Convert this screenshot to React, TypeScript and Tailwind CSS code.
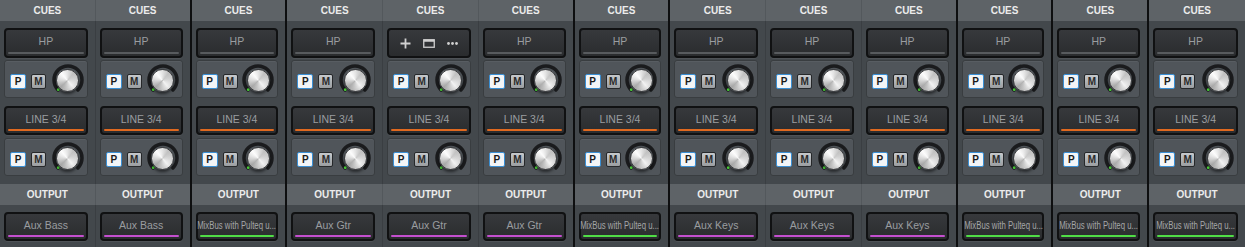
import React from "react";

type Sep = "light" | "black" | "none";

type Strip = {
  output: string;
  bus: "aux" | "mix";
  sep: Sep;
  icons?: boolean;
};

const strips: Strip[] = [
  { output: "Aux Bass", bus: "aux", sep: "light" },
  { output: "Aux Bass", bus: "aux", sep: "black" },
  { output: "MixBus with Pulteq u...", bus: "mix", sep: "black" },
  { output: "Aux Gtr", bus: "aux", sep: "light" },
  { output: "Aux Gtr", bus: "aux", sep: "light", icons: true },
  { output: "Aux Gtr", bus: "aux", sep: "black" },
  { output: "MixBus with Pulteq u...", bus: "mix", sep: "black" },
  { output: "Aux Keys", bus: "aux", sep: "light" },
  { output: "Aux Keys", bus: "aux", sep: "light" },
  { output: "Aux Keys", bus: "aux", sep: "black" },
  { output: "MixBus with Pulteq u...", bus: "mix", sep: "black" },
  { output: "MixBus with Pulteq u...", bus: "mix", sep: "black" },
  { output: "MixBus with Pulteq u...", bus: "mix", sep: "none" },
];

function Knob() {
  return (
    <div className="relative flex h-[32px] w-[32px] items-center justify-center">
      <svg className="absolute inset-0" width="32" height="32" viewBox="0 0 32 32">
        <path
          d="M6.1 25.9 A14 14 0 1 1 25.9 25.9"
          fill="none"
          stroke="#1a1b1d"
          strokeWidth="3.5"
          strokeLinecap="round"
        />
        <circle cx="6.3" cy="25.7" r="1.4" fill="#52e03f" />
      </svg>
      {/* metal cap */}
      <div className="relative h-[23px] w-[23px] rounded-full border border-[#3a3b3d] bg-[conic-gradient(from_-40deg,#fbfbfb,#b9b9b9_22%,#f2f2f2_50%,#a2a2a2_74%,#fbfbfb)] shadow-[0_2px_3px_rgba(0,0,0,0.5)]">
        <div className="absolute inset-0 rounded-full bg-[radial-gradient(circle_at_35%_30%,rgba(255,255,255,0.4),rgba(255,255,255,0)_60%,rgba(0,0,0,0.15))]" />
      </div>
    </div>
  );
}

function CuePanel() {
  return (
    <div className="flex h-[38px] items-center rounded-[3px] border border-[#393d40] bg-[#50555a] pl-[5px] pr-[3px] pt-[2px] shadow-[inset_0_1px_0_rgba(255,255,255,0.05)]">
      <div className="mt-[3px] flex gap-[5px]">
        <div className="flex h-[15px] w-[16px] items-center justify-center rounded-[2px] border-[1.5px] border-[#3a8fd4] bg-[#f3f5f7] text-[10px] font-bold leading-none text-[#1a1a1a]">
          P
        </div>
        <div className="flex h-[15px] w-[15px] items-center justify-center rounded-[2px] border border-[#26282a] bg-gradient-to-b from-[#c6c9cc] to-[#9b9ea1] text-[10px] font-bold leading-none text-[#2a2a2a]">
          M
        </div>
      </div>
      <div className="ml-auto">
        <Knob />
      </div>
    </div>
  );
}

function SlotIcons() {
  return (
    <div className="flex items-center gap-[12px] text-[#d0d0d0]">
      <svg width="11" height="11" viewBox="0 0 11 11">
        <path d="M5.5 0.5 V10.5 M0.5 5.5 H10.5" stroke="currentColor" strokeWidth="1.8" />
      </svg>
      <svg width="12" height="9" viewBox="0 0 12 9">
        <rect x="0.75" y="0.75" width="10.5" height="7.5" fill="none" stroke="currentColor" strokeWidth="1.3" />
        <rect x="0.75" y="0.75" width="10.5" height="2" fill="currentColor" />
      </svg>
      <svg width="11" height="3" viewBox="0 0 11 3">
        <circle cx="1.5" cy="1.5" r="1.4" fill="currentColor" />
        <circle cx="5.5" cy="1.5" r="1.4" fill="currentColor" />
        <circle cx="9.5" cy="1.5" r="1.4" fill="currentColor" />
      </svg>
    </div>
  );
}

function Slot({
  label,
  bar,
  tall,
  narrow,
  icons,
}: {
  label?: string;
  bar?: string;
  tall?: boolean;
  narrow?: boolean;
  icons?: boolean;
}) {
  return (
    <div
      className={`flex flex-col rounded-[4px] border-2 border-[#101112] bg-gradient-to-b from-[#37393c] to-[#2a2c2e] shadow-[0_1px_0_rgba(255,255,255,0.06)] ${
        tall ? "h-[30px]" : "h-[29px]"
      }`}
    >
      {icons ? (
        <div className="flex flex-1 items-center justify-center">
          <SlotIcons />
        </div>
      ) : (
        <>
          <div className="flex min-w-0 flex-1 items-center justify-center pt-[2px]">
            {narrow ? (
              <span className="inline-block shrink-0 scale-x-[0.78] whitespace-nowrap text-[10px] text-[#a4a6a8]">
                {label}
              </span>
            ) : (
              <span className="whitespace-nowrap text-[10.5px] text-[#9a9da0]">{label}</span>
            )}
          </div>
          <div className={`mx-[2px] mb-[2px] h-[2px] rounded-full ${bar}`} />
        </>
      )}
    </div>
  );
}

function Channel({ strip }: { strip: Strip }) {
  const light = strip.sep === "light";
  const headSep = light ? "border-r border-[#53585c]" : "";
  const bodySep = light ? "border-r border-[#3a3e42]" : "";
  const outBar = strip.bus === "mix" ? "bg-[#50dd46]" : "bg-[#c44fcf]";

  return (
    <div className={`flex min-w-0 flex-col ${strip.sep === "black" ? "border-r-2 border-[#0e0f10]" : ""}`}>
      <div className={`flex h-[21px] items-center justify-center bg-[#5e6367] text-[10px] font-bold text-[#ececec] ${headSep}`}>
        CUES
      </div>

      <div className={`flex h-[163px] flex-col pl-[4px] pr-[7px] pt-[7px] ${bodySep}`}>
        {strip.icons ? (
          <Slot tall icons />
        ) : (
          <Slot tall label="HP" bar="bg-[#585b5e]" />
        )}
        <div className="mt-[2px]">
          <CuePanel />
        </div>
        <div className="mt-[8px]">
          <Slot label="LINE 3/4" bar="bg-[#e0691f]" />
        </div>
        <div className="mt-[3px]">
          <CuePanel />
        </div>
      </div>

      <div className={`flex h-[21px] items-center justify-center bg-[#5e6367] text-[10px] font-bold text-[#ececec] ${headSep}`}>
        OUTPUT
      </div>

      <div className={`flex h-[42px] flex-col pl-[4px] pr-[7px] pt-[7px] ${bodySep}`}>
        <Slot label={strip.output} bar={outBar} narrow={strip.bus === "mix"} />
      </div>
    </div>
  );
}

export default function App() {
  return (
    <main className="h-[247px] w-[1245px] overflow-hidden bg-[#43484c] font-['Liberation_Sans',Arial,sans-serif]">
      <div className="grid grid-cols-13">
        {strips.map((s, i) => (
          <Channel key={i} strip={s} />
        ))}
      </div>
    </main>
  );
}
